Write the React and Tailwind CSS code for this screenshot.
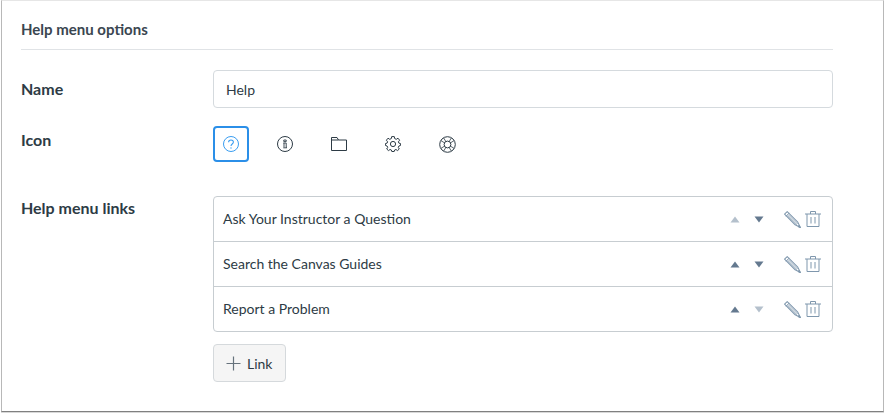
import React from "react";

const Tri = ({ down, dim }) => (
  <svg width="10" height="7" viewBox="0 0 10 7" className="block">
    <polygon points={down ? "0.5,0.5 9.5,0.5 5,6.5" : "0.5,6.5 9.5,6.5 5,0.5"} fill={dim ? "#b4c0cc" : "#64798f"} />
  </svg>
);

const Pencil = () => (
  <svg width="17" height="17" viewBox="0 0 18 18" fill="none" stroke="#7f97ad" strokeWidth="1.1" className="block">
    <path d="M0.6 3.4 L3.4 0.6 L14.6 11.8 L17.4 17.4 L11.8 14.6 Z" strokeLinejoin="round" />
    <path d="M2 5.6 L5.6 2 M4.2 3.6 L14.4 13.8 M3.2 4.6 L13.4 14.8" strokeWidth="0.9" />
    <path d="M15 15.4 L17.4 17.4 L15.8 16.9 Z" fill="#7f97ad" />
  </svg>
);

const Trash = () => (
  <svg width="16" height="16" viewBox="0 0 16 16" fill="none" stroke="#7f97ad" strokeWidth="1" className="block">
    <path d="M0 3 H16 M5.5 3 V0.5 H10.5 V3 M2 3 V15.5 H14 V3 M6 6 V12.5 M10 6 V12.5" />
  </svg>
);

const Row = ({ label, upDim, downDim, last }) => (
  <div className={`flex items-center pl-[9px] pr-[11px] ${last ? "h-[44px]" : "h-[45px] border-b border-[#c7cdd1]"}`}>
    <span className="flex-1 text-[14px] text-[#2d3b45] pb-[1px]">{label}</span>
    <div className="flex w-[34px] items-center justify-between mr-[20px]">
      <Tri dim={upDim} />
      <Tri down dim={downDim} />
    </div>
    <div className="flex items-center gap-[4px]">
      <Pencil />
      <Trash />
    </div>
  </div>
);

const ic = "#2d3b45";

export default function App() {
  return (
    <div className="h-[414px] w-[885px] bg-white font-['Lato','Open_Sans',sans-serif] overflow-hidden">
      <div className="ml-[1px] h-[412px] w-[883px] border-l border-r border-b border-t border-l-[#b8b8b8] border-r-[#b8b8b8] border-t-[#e6e6e6] border-b-[#808080] shadow-[0_1px_0_#d8d8d8] pl-[19px] pr-[50px]">
        <h2 className="flex h-[49px] items-center border-b border-[#e0e3e6] pt-[9px] text-[15px] font-bold text-[#3a4650]">
          Help menu options
        </h2>
        <div className="mt-[20px] flex items-center">
          <label className="w-[192px] text-[16px] font-bold text-[#2d3b45]">Name</label>
          <div className="flex h-[38px] flex-1 items-center rounded-[4px] border border-[#d5dade] pl-[12px] text-[14px] text-[#2d3b45]">
            Help
          </div>
        </div>
        <div className="mt-[18px] flex">
          <label className="w-[192px] pt-[3px] text-[16px] font-bold leading-[22px] text-[#2d3b45]">Icon</label>
          <div className="flex gap-[18px]">
            <div className="flex h-[36px] w-[36px] items-center justify-center rounded-[4px] border-2 border-[#2b8fe8]">
              <svg width="16" height="16" viewBox="0 0 16 16" fill="none" stroke="#3a9df0" strokeWidth="1">
                <circle cx="8" cy="8" r="7.5" />
                <path d="M5.6 6.2 C5.6 3.2 10.4 3.2 10.4 6.1 C10.4 8 8 8 8 10" strokeWidth="1.1" />
                <circle cx="8" cy="12" r="0.7" fill="#3a9df0" stroke="none" />
              </svg>
            </div>
            <div className="flex h-[36px] w-[36px] items-center justify-center">
              <svg width="16" height="16" viewBox="0 0 16 16" fill="none" stroke={ic} strokeWidth="1">
                <circle cx="8" cy="8" r="7.5" />
                <path d="M6.8 4 H9.2 V5.6 H6.8 Z M6.3 7 H9.2 V11.3 H9.9 M7 7 V11.3 M6.3 11.8 H9.9" strokeWidth="0.9" />
              </svg>
            </div>
            <div className="flex h-[36px] w-[36px] items-center justify-center">
              <svg width="16" height="14" viewBox="0 0 16 14" fill="none" stroke={ic} strokeWidth="1">
                <path d="M0.5 13.5 V0.5 H6 L7.5 3 H15.5 V13.5 Z M0.5 3 H7.5" />
              </svg>
            </div>
            <div className="flex h-[36px] w-[36px] items-center justify-center">
              <svg width="16" height="16" viewBox="0 0 16 16" fill="none" stroke={ic} strokeWidth="1" strokeLinejoin="round">
                <circle cx="8" cy="8" r="2.6" />
                <path d="M6.7 0.6 H9.3 L9.7 2.6 L11.3 3.3 L13 2.2 L14.6 4.2 L13.4 5.8 L13.9 7.1 L15.6 7.6 V9.4 L13.9 10 L13.3 11.4 L14.3 13 L12.5 14.6 L11 13.5 L9.6 14 L9.2 15.5 H6.8 L6.4 14 L5 13.5 L3.5 14.6 L1.7 13 L2.7 11.4 L2.1 10 L0.4 9.4 V7.6 L2.1 7.1 L2.6 5.8 L1.4 4.2 L3 2.2 L4.7 3.3 L6.3 2.6 Z" />
              </svg>
            </div>
            <div className="flex h-[36px] w-[36px] items-center justify-center">
              <svg width="17" height="17" viewBox="0 0 17 17" fill="none" stroke={ic} strokeWidth="1">
                <circle cx="8.5" cy="8.5" r="7.8" />
                <circle cx="8.5" cy="8.5" r="3.4" />
                <path d="M4.6 1.8 L6.8 5.5 M12.4 1.8 L10.2 5.5 M1.8 4.6 L5.5 6.8 M1.8 12.4 L5.5 10.2 M15.2 4.6 L11.5 6.8 M15.2 12.4 L11.5 10.2 M4.6 15.2 L6.8 11.5 M12.4 15.2 L10.2 11.5" strokeWidth="0.8" />
              </svg>
            </div>
          </div>
        </div>
        <div className="mt-[34px] flex">
          <label className="w-[192px] text-[16px] font-bold leading-[24px] text-[#2d3b45]">Help menu links</label>
          <div className="flex-1">
            <div className="rounded-[4px] border border-[#c7cdd1]">
              <Row label="Ask Your Instructor a Question" upDim />
              <Row label="Search the Canvas Guides" />
              <Row label="Report a Problem" downDim last />
            </div>
            <button className="mt-[12px] flex h-[38px] w-[73px] items-center rounded-[4px] border border-[#d5d9dc] bg-[#f5f5f5] pl-[12px] text-[14px] text-[#2d3b45]">
              <svg width="15" height="15" viewBox="0 0 15 15" stroke="#66727c" strokeWidth="1.2" className="mr-[6px]">
                <path d="M7.5 0.5 V14.5 M0.5 7.5 H14.5" />
              </svg>
              Link
            </button>
          </div>
        </div>
      </div>
    </div>
  );
}
